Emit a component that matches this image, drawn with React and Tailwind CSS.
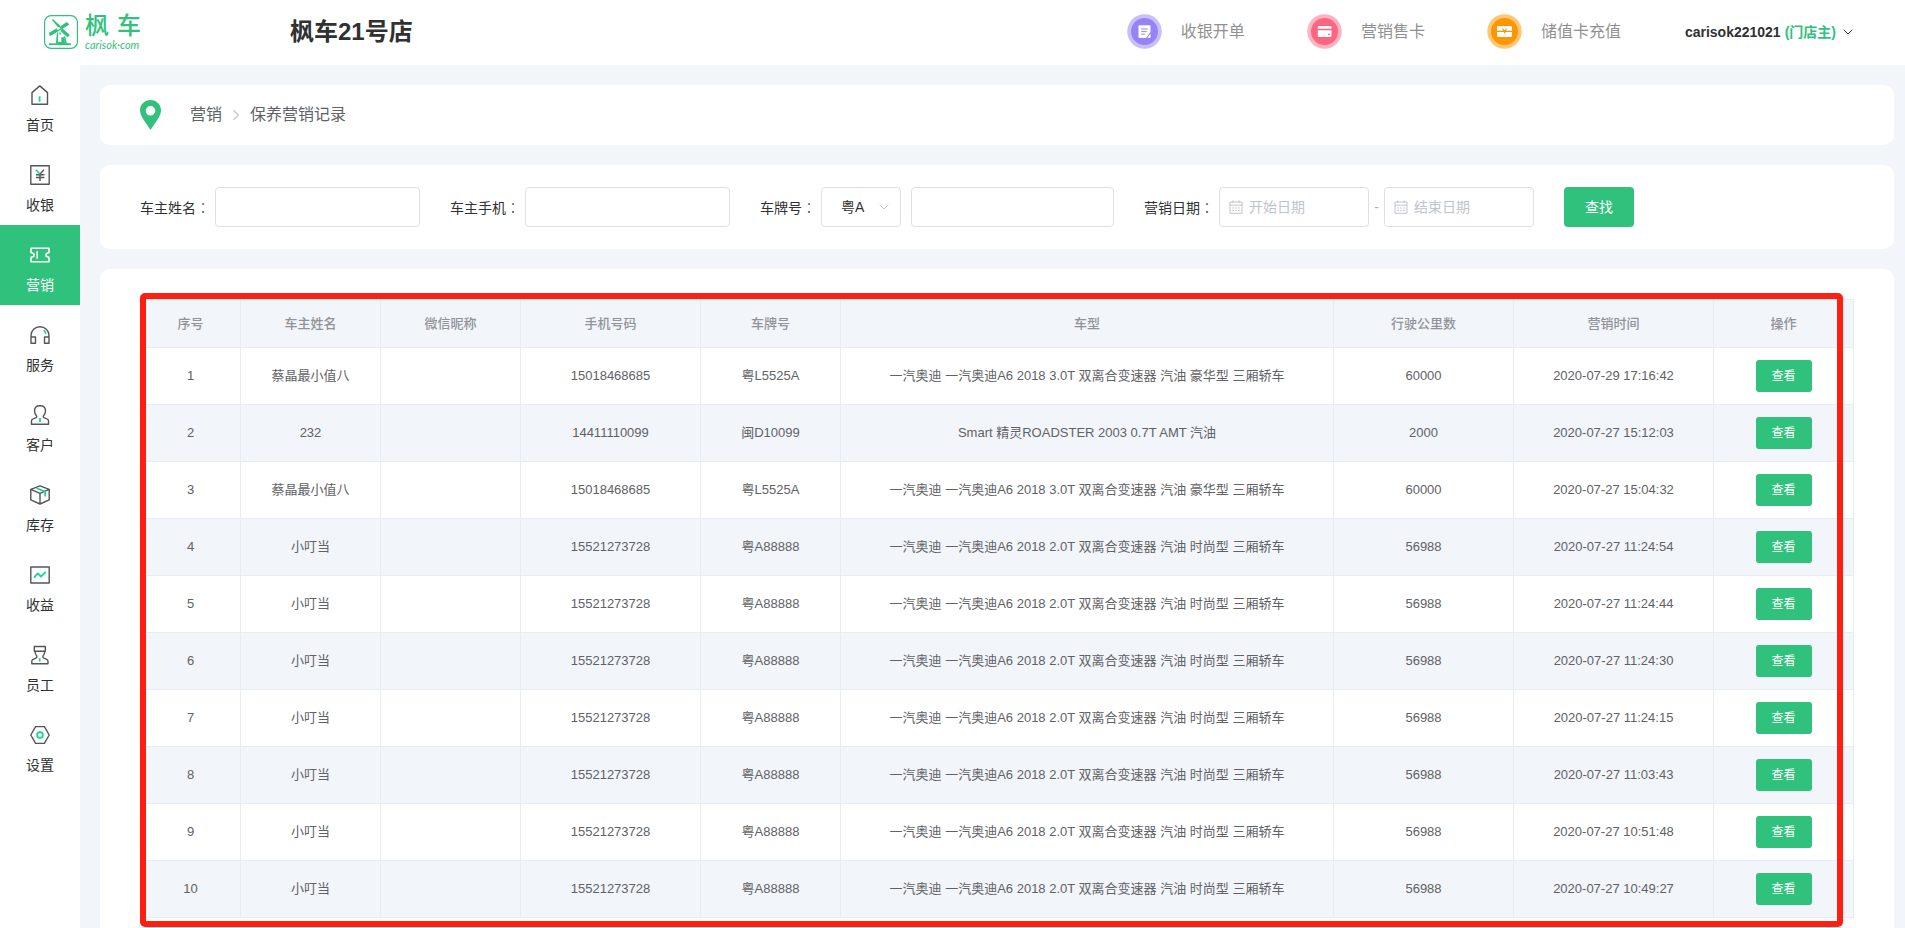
import { useState } from 'react'
import { ChevronDown, ChevronRight } from 'lucide-react'

const MENU = [
    { label: '首页', icon: HomeIcon },
    { label: '收银', icon: CashIcon },
    { label: '营销', icon: TicketIcon },
    { label: '服务', icon: HeadsetIcon },
    { label: '客户', icon: CustomerIcon },
    { label: '库存', icon: BoxIcon },
    { label: '收益', icon: TrendIcon },
    { label: '员工', icon: StaffIcon },
    { label: '设置', icon: SettingIcon },
]

const AUDI_30 = '一汽奥迪 一汽奥迪A6 2018 3.0T 双离合变速器 汽油 豪华型 三厢轿车'
const AUDI_20 = '一汽奥迪 一汽奥迪A6 2018 2.0T 双离合变速器 汽油 时尚型 三厢轿车'

const RECORDS = [
    { name: '蔡晶最小值八', phone: '15018468685', plate: '粤L5525A', model: AUDI_30, km: 60000, time: '2020-07-29 17:16:42' },
    { name: '232', phone: '14411110099', plate: '闽D10099', model: 'Smart 精灵ROADSTER 2003 0.7T AMT 汽油', km: 2000, time: '2020-07-27 15:12:03' },
    { name: '蔡晶最小值八', phone: '15018468685', plate: '粤L5525A', model: AUDI_30, km: 60000, time: '2020-07-27 15:04:32' },
    { name: '小叮当', phone: '15521273728', plate: '粤A88888', model: AUDI_20, km: 56988, time: '2020-07-27 11:24:54' },
    { name: '小叮当', phone: '15521273728', plate: '粤A88888', model: AUDI_20, km: 56988, time: '2020-07-27 11:24:44' },
    { name: '小叮当', phone: '15521273728', plate: '粤A88888', model: AUDI_20, km: 56988, time: '2020-07-27 11:24:30' },
    { name: '小叮当', phone: '15521273728', plate: '粤A88888', model: AUDI_20, km: 56988, time: '2020-07-27 11:24:15' },
    { name: '小叮当', phone: '15521273728', plate: '粤A88888', model: AUDI_20, km: 56988, time: '2020-07-27 11:03:43' },
    { name: '小叮当', phone: '15521273728', plate: '粤A88888', model: AUDI_20, km: 56988, time: '2020-07-27 10:51:48' },
    { name: '小叮当', phone: '15521273728', plate: '粤A88888', model: AUDI_20, km: 56988, time: '2020-07-27 10:49:27' },
]

const COLUMNS = [
    { title: '序号', width: 'w-[100px]' },
    { title: '车主姓名', width: 'w-[140px]' },
    { title: '微信昵称', width: 'w-[140px]' },
    { title: '手机号码', width: 'w-[180px]' },
    { title: '车牌号', width: 'w-[140px]' },
    { title: '车型', width: '' },
    { title: '行驶公里数', width: 'w-[180px]' },
    { title: '营销时间', width: 'w-[200px]' },
    { title: '操作', width: 'w-[140px]' },
]

const inputClass = 'h-10 border border-[#dcdfe6] rounded bg-white text-sm text-[#303133] focus:outline-none focus:border-[#30c27c]'

function MenuSvg({ children }) {
    return (
        <svg width="20" height="20" viewBox="0 0 20 20" fill="none" stroke="currentColor" strokeWidth="1.4" strokeLinejoin="round" aria-hidden="true">
            {children}
        </svg>
    )
}

function HomeIcon() {
    return (
        <MenuSvg>
            <path d="M2 19.2V7.6L9.8.9l7.7 6.7v11.6z" />
            <path d="M9.6 11.3v5.4" stroke="#13d691" strokeWidth="1.8" />
        </MenuSvg>
    )
}

function CashIcon() {
    return (
        <MenuSvg>
            <path d="M.8.8h18.4v18.4H.8z" />
            <path d="M10 9v7M6 9.7h8.4M6 12.5h8.4M10 9l4-4.2" />
            <path d="M5.8 4.8L10 9" stroke="#13d691" strokeWidth="1.6" />
        </MenuSvg>
    )
}

function TicketIcon() {
    return (
        <MenuSvg>
            <path d="M1 3.2h18v4.2l-2.8 1.3v2.6l2.8 1.3v4.2H1v-4.2l2.8-1.3V8.7L1 7.4z" strokeWidth="1.6" />
            <path d="M7.2 6.3v7.4" strokeWidth="1.6" />
        </MenuSvg>
    )
}

function HeadsetIcon() {
    return (
        <MenuSvg>
            <path d="M1 17.8v-7.3a9 8.8 0 0 1 18 0v7.3M1 12h4.5v6.3H1zM14.5 12H19v6.3h-4.5z" />
            <path d="M13.6 5.2c1.3.8 2 2 2.2 3.6" stroke="#13d691" strokeWidth="1.6" />
        </MenuSvg>
    )
}

function CustomerIcon() {
    return (
        <MenuSvg>
            <path d="M1.5 19.3v-3.5c0-1 .6-1.7 1.6-2l3.1-1.1c.7-.4.7-1.3.2-2C5.1 9.2 4.5 7.5 4.5 5.8 4.5 2.7 6.8.7 10 .7s5.500 2 5.500 5.100c0 1.700-.6 3.400-1.900 4.900-.5.7-.5 1.600.2 2l3.100 1.100c1 .3 1.600 1 1.600 2v3.500z" />
            <path d="M10 13v4" stroke="#13d691" strokeWidth="1.8" />
        </MenuSvg>
    )
}

function BoxIcon() {
    return (
        <MenuSvg>
            <path d="M10 .8l9.2 3.5v10.5L10 19 .8 14.8V4.3zM.8 4.3L10 8.3l9.2-4M10 8.3V19" />
            <path d="M6.5 3.2l8.7 3.4v5" stroke="#13d691" strokeWidth="1.7" />
        </MenuSvg>
    )
}

function TrendIcon() {
    return (
        <MenuSvg>
            <path d="M.8 2h18.4v16H.8z" />
            <path d="M4 12.6l3.8-4.2 3.2 3.2 4.8-4.8" stroke="#13d691" strokeWidth="1.8" />
        </MenuSvg>
    )
}

function StaffIcon() {
    return (
        <MenuSvg>
            <path d="M4.3 1.5h11v4.8h-11zM5 6.3c0 2.1.8 3.8 2 4.9 0 1-.4 1.5-1.2 1.9l-2.600 1.200c-1 .5-1.400 1-1.400 2v2.500H18v-2.500c0-1-.4-1.500-1.400-2L14 13.100c-.8-.4-1.200-.9-1.200-1.900 1.200-1.100 2-2.800 2-4.900" />
            <path d="M9.7 13v3.6" stroke="#13d691" strokeWidth="1.6" />
        </MenuSvg>
    )
}

function SettingIcon() {
    return (
        <MenuSvg>
            <path d="M5.600 1.600h8.800L19.200 10l-4.800 8.400H5.600L.8 10z" />
            <circle cx="10" cy="10" r="2.9" stroke="#13d691" strokeWidth="1.8" />
        </MenuSvg>
    )
}

function WindmillIcon() {
    return (
        <svg width="34" height="34" viewBox="0 0 34 34" fill="none" stroke="#30c27c" aria-hidden="true">
            <rect x=".6" y=".6" width="32.8" height="32.8" rx="6.5" strokeWidth="1.2" />
            <path d="M8.500 4.500L25 21M25 9L6 20.500" strokeWidth="1.3" />
            <path d="M8.500 5l5.500 7 2-1.500zM24.500 9.500L23 7l-6.500 4.500 1.300 2zM6 20.500l-1-2.500 7.500-4.500 1.500 2.200zM18.500 14l-2 2 7 6 2-2.200z" fill="#30c27c" strokeWidth=".4" />
            <path d="M13.500 17.500v11M13.500 17.500l-1 11" strokeWidth="1.2" />
            <path d="M16 17.500v2M20.500 21.500l1.700 7.500" strokeWidth="1.500" />
            <path d="M17.500 22.500h2.500l1.200 6.500h-7V27h3.300z" fill="#30c27c" strokeWidth=".4" />
            <path d="M5 29.200h22" strokeWidth="1.8" />
        </svg>
    )
}

function BillIcon() {
    return (
        <svg width="35" height="35" viewBox="0 0 35 35" aria-hidden="true">
            <circle cx="17.5" cy="17.5" r="17.3" fill="#c9bffb" />
            <circle cx="17.5" cy="17.5" r="13.5" fill="#9883f6" />
            <path d="M12.5 11.2h10a1 1 0 0 1 1 1V18L19 24h-6.5a1 1 0 0 1-1-1V12.2a1 1 0 0 1 1-1z" fill="#fff" />
            <path d="M23.5 19.5V23a1 1 0 0 1-1 1h-2z" fill="#fff" />
            <path d="M14.2 15h6.5M14.2 17.6h5.5M14.2 20.2h3.5" stroke="#9883f6" />
        </svg>
    )
}

function CardIcon() {
    return (
        <svg width="35" height="35" viewBox="0 0 35 35" aria-hidden="true">
            <circle cx="17.5" cy="17.5" r="17.3" fill="#ffb3c2" />
            <circle cx="17.5" cy="17.5" r="13.5" fill="#ff6480" />
            <path d="M12 12h11.5a1 1 0 0 1 1 1v1.8H10.8V13a1 1 0 0 1 1.2-1zM10.800 16.300h13.700V22a1 1 0 0 1-1 1H11.800a1 1 0 0 1-1-1z" fill="#fff" />
            <path d="M21 20.300h2" stroke="#ff6480" strokeWidth="1.3" />
        </svg>
    )
}

function RechargeIcon() {
    return (
        <svg width="35" height="35" viewBox="0 0 35 35" aria-hidden="true">
            <circle cx="17.5" cy="17.5" r="17.3" fill="#ffc876" />
            <circle cx="17.5" cy="17.5" r="13.5" fill="#ff9500" />
            <path d="M11 12h13a1 1 0 0 1 1 1v3.800H10V13a1 1 0 0 1 1-1zM10 18h15v4a1 1 0 0 1-1 1H11a1 1 0 0 1-1-1z" fill="#fff" />
            <path d="M15.500 14.500l2 3 2-3M17.500 17v2.500" stroke="#ff9500" strokeWidth="1.2" fill="none" />
        </svg>
    )
}

function PinIcon() {
    return (
        <svg width="21" height="30" viewBox="0 0 21 30" aria-hidden="true">
            <path fillRule="evenodd" fill="#30c27c" d="M10.5 0C4.7 0 0 4.6 0 10.3 0 17 7 24 10.5 30 14 24 21 17 21 10.3 21 4.6 16.3 0 10.5 0zm0 6a4.8 4.8 0 1 1 0 9.6 4.8 4.8 0 0 1 0-9.6z" />
        </svg>
    )
}

function CalendarIcon() {
    return (
        <svg width="14" height="14" viewBox="0 0 14 14" fill="none" stroke="#c0c4cc" aria-hidden="true">
            <path d="M1 2h12v11.3H1zM1 5.200h12M3.900.4v2.600M10.100.4v2.600" />
            <path d="M3.200 8h7.600M3.200 10.600h7.600" strokeDasharray="1.8 1.1" />
        </svg>
    )
}

function FieldLabel({ htmlFor, className = 'w-[75px]', children }) {
    return (
        <label htmlFor={htmlFor} className={`${className} shrink-0 text-sm text-[#303133] whitespace-nowrap`}>
            {children}
            <span className="font-['Noto_Sans_CJK_TC',sans-serif] font-light">：</span>
        </label>
    )
}

function DateInput({ id, placeholder }) {
    return (
        <div className="relative">
            <span className="absolute left-[10px] top-[13px]">
                <CalendarIcon />
            </span>
            <input id={id} type="text" aria-label={placeholder} placeholder={placeholder} className={`${inputClass} w-[150px] pl-[29px] pr-2 placeholder:text-[#c0c4cc]`} />
        </div>
    )
}

const Header = () => {
    return (
        <header className="bg-white flex items-center h-[65px] pl-11 pr-[49px] pb-[2px] whitespace-nowrap">
            <a href="#" className="flex items-center gap-[7px] w-[246px] text-[#30c27c]">
                <WindmillIcon />
                <span className="flex flex-col">
                    <span className="flex gap-2 text-2xl leading-[26px] font-medium">
                        <span>枫</span>
                        <span>车</span>
                    </span>
                    <span className="text-[11px] leading-3 italic font-['Lato',sans-serif]">carisok·com</span>
                </span>
            </a>
            <h1 className="text-2xl font-bold text-[#303133]">枫车21号店</h1>
            <nav className="ml-auto flex items-center text-base text-[#909090]">
                <a href="#" className="flex items-center gap-[19px] mr-[62px]">
                    <BillIcon />
                    收银开单
                </a>
                <a href="#" className="flex items-center gap-[19px] mr-[62px]">
                    <CardIcon />
                    营销售卡
                </a>
                <a href="#" className="flex items-center gap-[19px] mr-16">
                    <RechargeIcon />
                    储值卡充值
                </a>
            </nav>
            <button type="button" className="flex items-center gap-1 text-sm font-bold text-[#303133]">
                carisok221021
                <span className="text-[#30c27c]">(门店主)</span>
                <ChevronDown size={16} strokeWidth={1.5} />
            </button>
        </header>
    )
}

const Sidebar = ({ active, onSelect }) => {
    return (
        <aside className="w-20 shrink-0 bg-white">
            {MENU.map((item) => (
                <button
                    key={item.label}
                    type="button"
                    onClick={() => onSelect(item.label)}
                    className={`w-20 h-20 flex flex-col items-center pt-5 gap-[10px] ${item.label === active ? 'bg-[#30c27c] text-white' : 'text-[#555]'}`}
                >
                    <item.icon />
                    <span className={`text-sm leading-5 ${item.label === active ? 'text-white' : 'text-[#303133]'}`}>{item.label}</span>
                </button>
            ))}
        </aside>
    )
}

const SearchForm = () => {
    return (
        <form onSubmit={(e) => e.preventDefault()} className="bg-white rounded-[10px] px-10 py-[22px] flex items-center gap-[30px]">
            <div className="flex items-center">
                <FieldLabel htmlFor="owner">车主姓名</FieldLabel>
                <input id="owner" type="text" className={`${inputClass} w-[205px] px-4`} />
            </div>
            <div className="flex items-center">
                <FieldLabel htmlFor="mobile">车主手机</FieldLabel>
                <input id="mobile" type="text" className={`${inputClass} w-[205px] px-4`} />
            </div>
            <div className="flex items-center">
                <FieldLabel htmlFor="plate" className="w-[61px]">车牌号</FieldLabel>
                <div className="relative mr-[10px]">
                    <select aria-label="车牌前缀" className={`${inputClass} w-20 pl-[19px] appearance-none`}>
                        <option>粤A</option>
                    </select>
                    <ChevronDown size={16} strokeWidth={1.5} className="absolute right-[9px] top-3 text-[#c0c4cc] pointer-events-none" />
                </div>
                <input id="plate" type="text" className={`${inputClass} w-[203px] px-4`} />
            </div>
            <div className="flex items-center">
                <FieldLabel htmlFor="start">营销日期</FieldLabel>
                <DateInput id="start" placeholder="开始日期" />
                <span className="w-[15px] text-center text-sm text-[#b0b0b0]">-</span>
                <DateInput id="end" placeholder="结束日期" />
            </div>
            <button type="submit" className="w-[70px] h-10 rounded bg-[#30c27c] hover:bg-[#28b370] text-sm text-white">
                查找
            </button>
        </form>
    )
}

const RecordTable = () => {
    return (
        <div className="relative">
            <table className="w-full table-fixed border-separate border-spacing-0 border-l border-t border-[#e8ecf4] text-[13px] leading-5 text-center text-[#606266]">
                <thead>
                    <tr className="h-12 bg-[#f2f5fa] text-[#909399]">
                        {COLUMNS.map((col) => (
                            <th key={col.title} className={`${col.width} font-medium border-r border-b border-[#e8ecf4]`}>
                                {col.title}
                            </th>
                        ))}
                    </tr>
                </thead>
                <tbody>
                    {RECORDS.map((row, index) => (
                        <tr key={row.time} className="h-[57px] even:bg-[#f2f5fa] [&>td]:border-r [&>td]:border-b [&>td]:border-[#e8ecf4]">
                            <td>{index + 1}</td>
                            <td>{row.name}</td>
                            <td></td>
                            <td>{row.phone}</td>
                            <td>{row.plate}</td>
                            <td>{row.model}</td>
                            <td>{row.km}</td>
                            <td>{row.time}</td>
                            <td>
                                <button type="button" className="w-14 h-8 rounded-[3px] bg-[#30c27c] hover:bg-[#28b370] text-xs text-white align-middle">
                                    查看
                                </button>
                            </td>
                        </tr>
                    ))}
                </tbody>
            </table>
            {/* highlight frame over the records */}
            <div className="absolute -top-[6px] left-0 right-[11px] -bottom-[9px] border-6 border-[#ff1e10] rounded-[5px] pointer-events-none" />
        </div>
    )
}

const App = () => {
    const [active, setActive] = useState('营销')

    return (
        <div className="min-h-screen flex flex-col bg-[#f2f5fa] font-['Liberation_Sans','Noto_Sans_CJK_SC',sans-serif]">
            <Header />
            <div className="flex-1 flex">
                <Sidebar active={active} onSelect={setActive} />
                <main className="flex-1 min-w-0 flex flex-col gap-5 pt-5 pl-5 pr-[11px]">
                    <nav className="bg-white rounded-[10px] px-10 py-[15px] flex items-center text-base leading-6 text-[#606266]">
                        <PinIcon />
                        <a href="#" className="ml-[29px]">营销</a>
                        <ChevronRight size={18} strokeWidth={1.5} className="mx-[5px] text-[#c0c4cc]" />
                        <span>保养营销记录</span>
                    </nav>
                    <SearchForm />
                    <section className="flex-1 bg-white rounded-t-[10px] px-10 pt-[30px] pb-[9px]">
                        <RecordTable />
                    </section>
                </main>
            </div>
        </div>
    )
}

export default App
